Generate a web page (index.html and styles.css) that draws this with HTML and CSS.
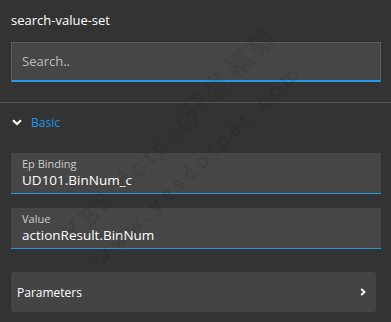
FILE: index.html
```html
<!DOCTYPE html>
<html lang="en">
<head>
    <meta charset="UTF-8">
    <title>search-value-set</title>
    <link rel="stylesheet" href="styles.css">
</head>
<body>
    <div class="panel">
        <div class="panel-head">
            <h3 class="widget-name">search-value-set</h3>
            <div class="search-box">Search..</div>
        </div>
        <div class="section">
            <div class="section-title">
                <svg class="chev-down" width="10" height="7" viewBox="0 0 10 7"><path d="M1 1.2 L5 5 L9 1.2" fill="none" stroke="#fff" stroke-width="2.2"/></svg>
                <span>Basic</span>
            </div>
            <div class="field">
                <label>Ep Binding</label>
                <div class="field-value">UD101.BinNum_c</div>
            </div>
            <div class="field">
                <label>Value</label>
                <div class="field-value">actionResult.BinNum</div>
            </div>
            <div class="nav-card">
                <span>Parameters</span>
                <svg class="chev-right" width="6" height="8" viewBox="0 0 6 8"><path d="M1.2 1 L4.5 4 L1.2 7" fill="none" stroke="#fff" stroke-width="1.8"/></svg>
            </div>
        </div>
        <!-- watermark -->
        <div class="wm wm-1">YES dotnet开发框架</div>
        <div class="wm wm-2">www.yesdotnet.com</div>
    </div>
</body>
</html>
```

FILE: styles.css
```css
body {
    margin: 0;
    background-color: #333333;
    font-family: 'Open Sans', 'Noto Sans', sans-serif;
    color: #fff;
}
.panel {
    position: relative;
    width: 391px;
    height: 322px;
    overflow: hidden;
}
.panel-head {
    padding: 10px 10px 20px 11px;
    border-bottom: 1px solid #555;
}
.widget-name {
    margin: 0 0 12px;
    font-size: 13px;
    font-weight: 400;
    line-height: 20px;
}
.search-box {
    box-sizing: border-box;
    height: 40px;
    border: 1px solid #5c5c5c;
    border-bottom: 2px solid #1e9ae6;
    background-color: #464646;
    color: #bdbdbd;
    font-size: 13px;
    line-height: 37px;
    padding-left: 10px;
}
.section {
    padding: 8px 10px 0 11px;
}
.section-title {
    display: flex;
    align-items: center;
    height: 22px;
    color: #1e9ae6;
    font-size: 12px;
}
.chev-down {
    margin: 0 9px 0 1px;
}
.field {
    margin-top: 20px;
    background-color: #464646;
    border-bottom: 1px solid #1e9ae6;
    padding: 3px 11px 2px;
    height: 35px;
}
.field + .field {
    margin-top: 14px;
}
.field label {
    display: block;
    color: #cfcfcf;
    font-size: 11px;
    line-height: 15px;
}
.field-value {
    font-size: 13.5px;
    line-height: 19px;
}
.nav-card {
    margin: 23px 5px 0 0;
    height: 40px;
    border-radius: 3px;
    background-color: #444444;
    display: flex;
    align-items: center;
    justify-content: space-between;
    padding: 0 10px 0 6px;
    font-size: 12px;
}
.wm {
    position: absolute;
    font-family: 'Liberation Serif', 'Noto Sans CJK SC', serif;
    color: transparent;
    -webkit-text-stroke: 0.5px rgba(0, 0, 0, 0.22);
    white-space: nowrap;
    transform-origin: 0 100%;
    pointer-events: none;
}
.wm-1 {
    left: 76px;
    top: 222px;
    font-size: 26px;
    line-height: 26px;
    letter-spacing: 5px;
    transform: rotate(-45deg);
}
.wm-2 {
    left: 104px;
    top: 248px;
    font-size: 22px;
    line-height: 22px;
    letter-spacing: 6px;
    transform: rotate(-44deg);
}
```
